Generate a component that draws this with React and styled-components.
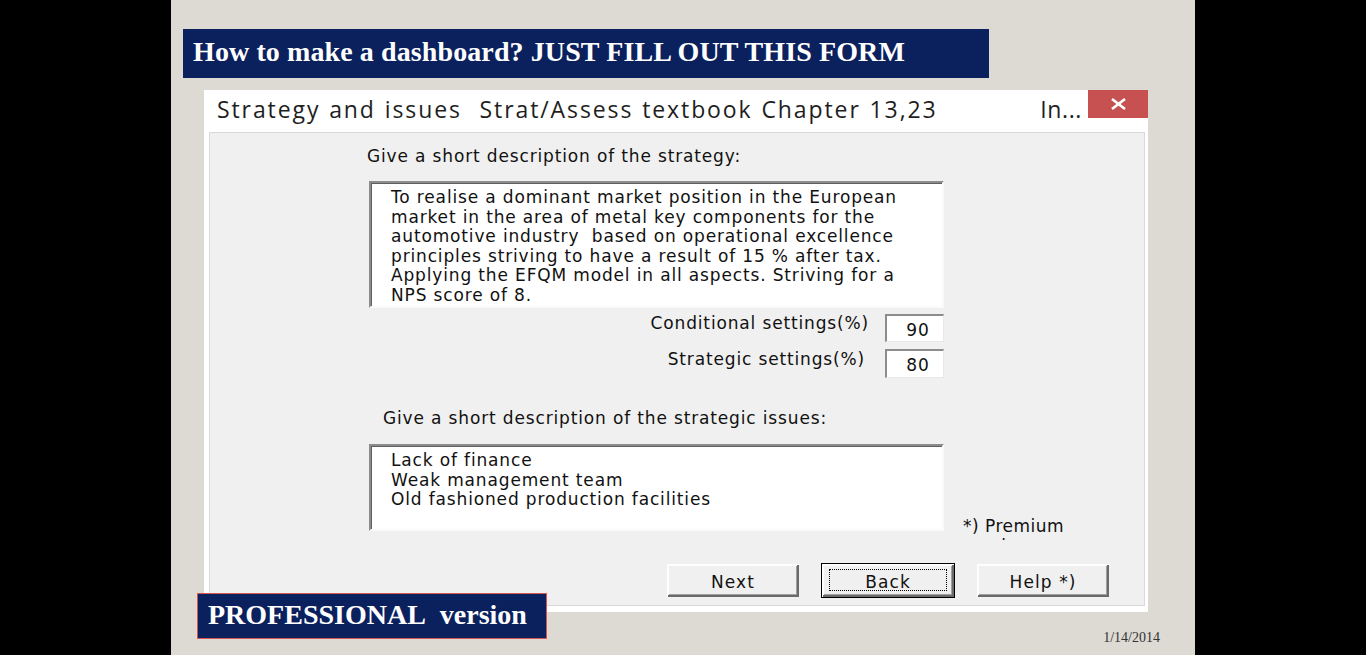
import React from "react";
import styled, { createGlobalStyle } from "styled-components";

const Global = createGlobalStyle`
  html, body { margin: 0; padding: 0; background: #000; }
  #root { width: 1366px; height: 655px; }
`;

const Page = styled.div`
  width: 1366px;
  height: 655px;
  background: #000;
  display: flex;
  justify-content: center;
  overflow: hidden;
`;

const Slide = styled.div`
  position: relative;
  width: 1024px;
  height: 655px;
  background: #ddd9d3;
  display: flex;
  flex-direction: column;
  padding-top: 29px;
  box-sizing: border-box;
`;

const Banner = styled.div`
  box-sizing: border-box;
  background: #0b215e;
  color: #fff;
  font-family: "Liberation Serif", "Times New Roman", serif;
  font-weight: bold;
  font-size: 28px;
  display: flex;
  align-items: center;
  white-space: nowrap;
`;

const TitleBanner = styled(Banner)`
  margin-left: 12px;
  width: 806px;
  height: 49px;
  padding: 0 0 3px 10px;
  letter-spacing: 0.1px;
`;

const EditionBanner = styled(Banner)`
  position: absolute;
  left: 26px;
  top: 593px;
  width: 350px;
  height: 46px;
  padding: 0 0 2px 10px;
  border: 1px solid #d9544f;
`;

const Dialog = styled.div`
  margin: 12px 0 0 33px;
  width: 944px;
  height: 522px;
  background: #fff;
  display: flex;
  flex-direction: column;
`;

const TitleBar = styled.div`
  height: 42px;
  display: flex;
  align-items: flex-start;
  font-family: "Open Sans", "Noto Sans", sans-serif;
  font-size: 23px;
  color: #1e1e1e;
`;

const TitleText = styled.div`
  padding: 4px 0 0 13px;
  flex: 1;
  white-space: nowrap;
  line-height: 30px;
  letter-spacing: 1.9px;
  word-spacing: 1px;
`;

const TitleTail = styled.div`
  padding-top: 4px;
  margin-right: 6px;
  line-height: 30px;
  letter-spacing: 0.6px;
`;

const CloseButton = styled.div`
  width: 60px;
  height: 28px;
  background: #c75050;
  display: flex;
  align-items: center;
  justify-content: center;
`;

const Client = styled.div`
  flex: 1;
  margin: 0 3px 6px 5px;
  background: #f0f0f0;
  border: 1px solid #d9d9d9;
  display: flex;
  flex-direction: column;
  font-family: "DejaVu Sans", Verdana, sans-serif;
  font-size: 17px;
  letter-spacing: 0.85px;
  color: #111;
`;

const FormColumn = styled.div`
  margin-left: 159px;
  width: 575px;
  display: flex;
  flex-direction: column;
`;

const Label = styled.div`
  line-height: 20px;
  height: 20px;
  white-space: nowrap;
  margin-top: ${(p) => p.$top}px;
  margin-left: ${(p) => p.$indent}px;
`;

const TextArea = styled.div`
  box-sizing: border-box;
  flex-shrink: 0;
  width: 575px;
  height: ${(p) => p.$h}px;
  margin-top: ${(p) => p.$top}px;
  background: #fff;
  border-top: 2px solid #8c8c8c;
  border-left: 2px solid #8c8c8c;
  border-right: 2px solid #fafafa;
  border-bottom: 2px solid #fafafa;
  box-shadow: inset 1px 1px 0 #5f5f5f;
  padding: 5px 0 0 20px;
  line-height: 19.5px;
  white-space: pre-wrap;
`;

const SettingRow = styled.div`
  display: flex;
  justify-content: flex-end;
  align-items: flex-start;
  margin-top: ${(p) => p.$top}px;
  gap: ${(p) => p.$gap}px;
`;

const SettingLabel = styled.div`
  line-height: 20px;
  margin-top: ${(p) => p.$shift}px;
  white-space: nowrap;
`;

const ValueBox = styled.div`
  box-sizing: border-box;
  width: 59px;
  height: ${(p) => p.$h}px;
  background: #fff;
  border-top: 2px solid #8c8c8c;
  border-left: 2px solid #8c8c8c;
  border-right: 1px solid #e8e8e8;
  border-bottom: 1px solid #e8e8e8;
  display: flex;
  align-items: center;
  justify-content: center;
  padding: 2px 0 0 6px;
`;

const IssuesRow = styled.div`
  display: flex;
  align-items: flex-start;
`;

const Note = styled.div`
  flex-shrink: 0;
  margin: 88px 0 0 19px;
  width: 110px;
  height: 24px;
  line-height: 20px;
  overflow: hidden;
  letter-spacing: 0.5px;
`;

const ButtonRow = styled.div`
  display: flex;
  gap: 21px;
  margin: 23px 0 0 456px;
`;

const Button = styled.div`
  box-sizing: border-box;
  width: 134px;
  height: 35px;
  background: #f0f0f0;
  border: 1px solid ${(p) => (p.$focused ? "#000" : "transparent")};
  box-shadow: inset 1px 1px 0 #fff, inset -2px -2px 0 #6a6a6a,
    inset 2px 2px 0 #fcfcfc, inset -3px -3px 0 #a0a0a0;
  display: flex;
  align-items: center;
  justify-content: center;
  padding-top: 3px;
  font-size: 17px;
  letter-spacing: 1.1px;
  position: relative;
`;

const FocusRing = styled.span`
  position: absolute;
  inset: 5px 7px 6px 7px;
  border: 1px dotted #000;
`;

const Footer = styled.div`
  display: flex;
  justify-content: flex-end;
  padding-right: 35px;
  margin-top: 18px;
  font-family: "Liberation Serif", "Times New Roman", serif;
  font-size: 14px;
  color: #333;
`;

const strategy =
  "To realise a dominant market position in the European\nmarket in the area of metal key components for the\nautomotive industry  based on operational excellence\nprinciples striving to have a result of 15 % after tax.\nApplying the EFQM model in all aspects. Striving for a\nNPS score of 8.";

const issues =
  "Lack of finance\nWeak management team\nOld fashioned production facilities";

export default function App() {
  return (
    <Page>
      <Global />
      <Slide>
        <TitleBanner>How to make a dashboard? JUST FILL OUT THIS FORM</TitleBanner>
        <Dialog>
          <TitleBar>
            <TitleText>
              Strategy and issues&nbsp; Strat/Assess textbook Chapter 13,23
            </TitleText>
            <TitleTail>In...</TitleTail>
            <CloseButton>
              <svg width="17" height="12" viewBox="0 0 17 12">
                <path d="M2 1 L15 11 M15 1 L2 11" stroke="#fff" strokeWidth="2.6" />
              </svg>
            </CloseButton>
          </TitleBar>
          <Client>
            <FormColumn>
              <Label $top={13} $indent={-2}>
                Give a short description of the strategy:
              </Label>
              <TextArea $h={127} $top={15}>{strategy}</TextArea>
              <SettingRow $top={6} $gap={16}>
                <SettingLabel $shift={-1}>Conditional settings(%)</SettingLabel>
                <ValueBox $h={28}>90</ValueBox>
              </SettingRow>
              <SettingRow $top={7} $gap={20}>
                <SettingLabel $shift={0}>Strategic settings(%)</SettingLabel>
                <ValueBox $h={29}>80</ValueBox>
              </SettingRow>
              <Label $top={30} $indent={14}>
                Give a short description of the strategic issues:
              </Label>
              <IssuesRow>
                <TextArea $h={87} $top={16}>{issues}</TextArea>
                <Note>*) Premium version</Note>
              </IssuesRow>
            </FormColumn>
            <ButtonRow>
              <Button>Next</Button>
              <Button $focused>
                <FocusRing />
                Back
              </Button>
              <Button>Help *)</Button>
            </ButtonRow>
          </Client>
        </Dialog>
        <Footer>1/14/2014</Footer>
        <EditionBanner>PROFESSIONAL&nbsp; version</EditionBanner>
      </Slide>
    </Page>
  );
}
